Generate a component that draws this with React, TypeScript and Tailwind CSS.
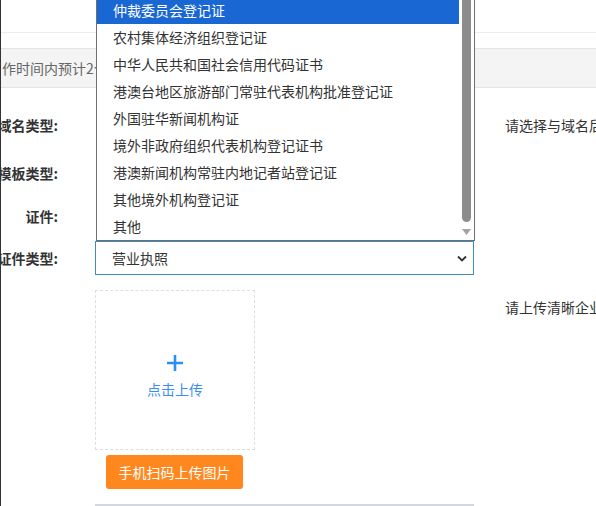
const options = [
  "仲裁委员会登记证",
  "农村集体经济组织登记证",
  "中华人民共和国社会信用代码证书",
  "港澳台地区旅游部门常驻代表机构批准登记证",
  "外国驻华新闻机构证",
  "境外非政府组织代表机构登记证书",
  "港澳新闻机构常驻内地记者站登记证",
  "其他境外机构登记证",
  "其他",
];

function Label({ text }: { text: string }) {
  return (
    <div className="flex w-[57px] shrink-0 justify-end whitespace-nowrap font-bold leading-[20px] text-[#333]">
      {text}
    </div>
  );
}

export default function App() {
  return (
    <div className="relative h-[506px] w-[596px] overflow-hidden border-l border-[#333] bg-white font-['Noto_Sans_CJK_SC','Noto_Sans',sans-serif] text-[14px] text-[#333]">
      {/* Header strip */}
      <div className="h-[32px]" />
      <div className="h-[16px] border-t border-[#ececec]" />
      <div className="flex h-[40px] items-center whitespace-nowrap border-y border-[#e4e4e4] bg-[#f4f4f4] pl-[1px] text-[#666]">
        作时间内预计2个工作日内完成审核
      </div>

      {/* Form */}
      <div className="mt-[13px] flex h-[48px] items-center">
        <Label text="域名类型:" />
        <div className="ml-[37px] w-[379px] shrink-0" />
        <div className="ml-[31px] whitespace-nowrap">请选择与域名后缀对应的类型</div>
      </div>
      <div className="flex h-[48px] items-center">
        <Label text="模板类型:" />
      </div>
      <div className="flex h-[44px] items-start pt-[9px]">
        <Label text="证件:" />
      </div>
      <div className="flex h-[34px] items-center">
        <Label text="证件类型:" />
        <div className="ml-[37px] flex h-[34px] w-[379px] shrink-0 items-center justify-between border border-[#3f8cc0] pl-[16px] pr-[6px]">
          <span>营业执照</span>
          <svg width="10" height="7" viewBox="0 0 10 7">
            <path d="M1 1.5 5 5.5 9 1.5" fill="none" stroke="#333" strokeWidth="1.8" />
          </svg>
        </div>
      </div>

      <div className="mt-[15px] flex items-start">
        <div className="w-[57px] shrink-0" />
        <div className="ml-[37px] w-[379px] shrink-0">
          <div className="flex h-[160px] w-[160px] flex-col items-center border border-dashed border-[#dedede] pt-[63px]">
            <svg width="18" height="18" viewBox="0 0 18 18">
              <path d="M9 1v16M1 9h16" stroke="#2b8ef5" strokeWidth="2.6" />
            </svg>
            <div className="mt-[7px] text-[14px] leading-[20px] text-[#3a8ef2]">点击上传</div>
          </div>
          <button className="ml-[11px] mt-[5px] flex h-[34px] w-[137px] items-center justify-center rounded-[3px] bg-[#ff871d] text-[14px] text-white">
            手机扫码上传图片
          </button>
          <div className="mt-[15px] w-[379px] border-t-2 border-[#d2d8e1]" />
        </div>
        <div className="ml-[31px] mt-[7px] whitespace-nowrap leading-[20px]">请上传清晰企业营业执照</div>
      </div>

      {/* Open dropdown list */}
      <div className="absolute left-[95px] top-[-3px] flex w-[379px] border-x border-b border-[#6f6f6f] bg-white">
        <ul className="w-[362px]">
          {options.map((o, i) => (
            <li
              key={o}
              className={`flex h-[27px] items-center whitespace-nowrap pl-[16px] ${
                i === 0 ? "bg-[#1967d2] text-white" : "text-[#333]"
              }`}
            >
              {o}
            </li>
          ))}
        </ul>
        <div className="flex w-[15px] flex-col items-start pl-[3px]">
          <div className="h-[225px] w-[9px] rounded-b-[5px] bg-[#8c8c8c]" />
          <svg width="9" height="7" viewBox="0 0 9 7" className="mt-[7px]">
            <path d="M0 0h9L4.5 6z" fill="#a3a3a3" />
          </svg>
        </div>
      </div>
    </div>
  );
}
